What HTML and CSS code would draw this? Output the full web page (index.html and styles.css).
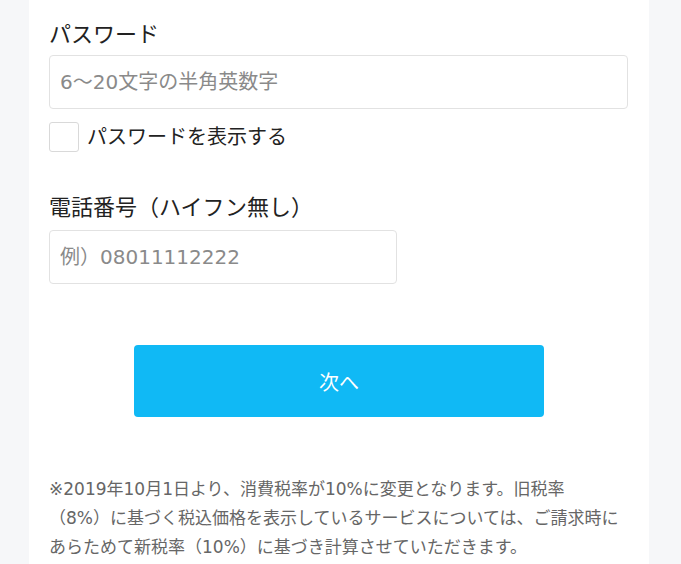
FILE: index.html
```html
<!DOCTYPE html>
<html lang="ja">
<head>
<meta charset="utf-8">
<link rel="stylesheet" href="styles.css">
</head>
<body>
<main class="card">
  <div class="field">
    <label class="label" for="pw">パスワード</label>
    <input class="input input-wide" id="pw" type="password" placeholder="6～20文字の半角英数字">
    <label class="check">
      <span class="box"></span>
      <span class="check-text">パスワードを表示する</span>
    </label>
  </div>
  <div class="field field-phone">
    <label class="label" for="tel">電話番号（ハイフン無し）</label>
    <input class="input input-short" id="tel" type="tel" placeholder="例）08011112222">
  </div>
  <div class="actions">
    <button class="btn" type="button">次へ</button>
  </div>
  <p class="notice">※2019年10月1日より、消費税率が10%に変更となります。旧税率<br>（8%）に基づく税込価格を表示しているサービスについては、ご請求時にあらためて新税率（10%）に基づき計算させていただきます。</p>
</main>
</body>
</html>
```
FILE: styles.css
```css
html, body {
  margin: 0;
  padding: 0;
}
body {
  background: #f6f7f9;
  font-family: "DejaVu Sans", "Noto Sans CJK JP", sans-serif;
  color: #222;
  height: 564px;
  overflow: hidden;
}
.card {
  margin-left: 29px;
  width: 620px;
  min-height: 564px;
  background: #fff;
  padding: 19px 20px 0;
  box-sizing: border-box;
}
.field {
  display: flex;
  flex-direction: column;
  align-items: flex-start;
}
.label {
  font-size: 22px;
  line-height: 32px;
  color: #222;
  margin-bottom: 4px;
}
.field-phone .label {
  margin-bottom: 6px;
}
.input {
  box-sizing: border-box;
  height: 54px;
  border: 1px solid #e2e2e2;
  border-radius: 4px;
  padding: 0 10px;
  font-family: inherit;
  font-size: 20px;
  color: #333;
  background: #fff;
  outline: none;
}
.input::placeholder {
  color: #8a8a8a;
}
.input-wide {
  width: 579px;
}
.input-short {
  width: 348px;
}
.check {
  display: flex;
  align-items: center;
  gap: 8px;
  margin-top: 13px;
}
.box {
  width: 30px;
  height: 30px;
  box-sizing: border-box;
  border: 1px solid #d9d9d9;
  border-radius: 3px;
  background: #fff;
}
.check-text {
  font-size: 20px;
  line-height: 30px;
  color: #222;
}
.field-phone {
  margin-top: 40px;
}
.actions {
  display: flex;
  justify-content: center;
  margin-top: 61px;
}
.btn {
  width: 410px;
  height: 72px;
  border: none;
  border-radius: 4px;
  background: #10b9f5;
  color: #fff;
  font-family: inherit;
  font-size: 20px;
  cursor: pointer;
}
.notice {
  margin: 58px 0 0;
  font-size: 17px;
  line-height: 29px;
  color: #666;
}
```
